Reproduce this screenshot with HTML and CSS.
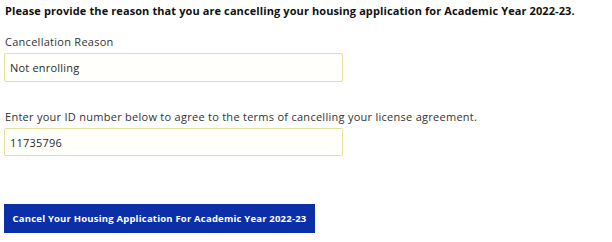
FILE: index.html
```html
<!DOCTYPE html>
<html lang="en">
<head>
<meta charset="utf-8">
<title>Cancel Housing Application</title>
<link rel="stylesheet" href="styles.css">
</head>
<body>
<form class="cancel-form">
  <p class="intro">Please provide the reason that you are cancelling your housing application for Academic Year 2022-23.</p>
  <div class="field field-reason">
    <label class="field-label" for="reason">Cancellation Reason</label>
    <input class="field-input" id="reason" type="text" value="Not enrolling">
  </div>
  <div class="field field-id">
    <label class="field-label" for="idnum">Enter your ID number below to agree to the terms of cancelling your license agreement.</label>
    <input class="field-input input-id" id="idnum" type="text" value="11735796">
  </div>
  <div class="actions">
    <button class="cancel-btn" type="button">Cancel Your Housing Application For Academic Year 2022-23</button>
  </div>
</form>
</body>
</html>
```
FILE: styles.css
```css
html, body {
  margin: 0;
  padding: 0;
  background: #ffffff;
}
body {
  font-family: "Open Sans", "Noto Sans", sans-serif;
  color: #2b2b2b;
}
.cancel-form {
  display: flex;
  flex-direction: column;
  padding: 3px 4px 0 4px;
}
.intro {
  margin: 0;
  padding-left: 1px;
  font-size: 11px;
  line-height: 16px;
  font-weight: 700;
  letter-spacing: 0.1px;
  color: #111111;
}
.field {
  display: flex;
  flex-direction: column;
}
.field-reason {
  margin-top: 15px;
}
.field-id {
  margin-top: 27px;
}
.field-label {
  padding-left: 1px;
  font-size: 11px;
  line-height: 16px;
  letter-spacing: 0.27px;
  color: #333333;
  margin-bottom: 3px;
}
.field-input {
  box-sizing: border-box;
  width: 339px;
  height: 29px;
  margin: 0;
  padding: 0 5px;
  border: 1px solid #e4e09c;
  border-radius: 2px;
  background: #fffffb;
  font-family: inherit;
  font-size: 11px;
  letter-spacing: 0.2px;
  color: #2b2b2b;
  outline: none;
}
.input-id {
  height: 28px;
}
.actions {
  margin-top: 48px;
}
.cancel-btn {
  box-sizing: border-box;
  width: 311px;
  height: 29px;
  margin: 0;
  padding: 0;
  border: none;
  background: #0b2fa8;
  color: #ffffff;
  font-family: inherit;
  font-size: 9.5px;
  font-weight: 700;
  letter-spacing: 0.2px;
  cursor: pointer;
}
```
